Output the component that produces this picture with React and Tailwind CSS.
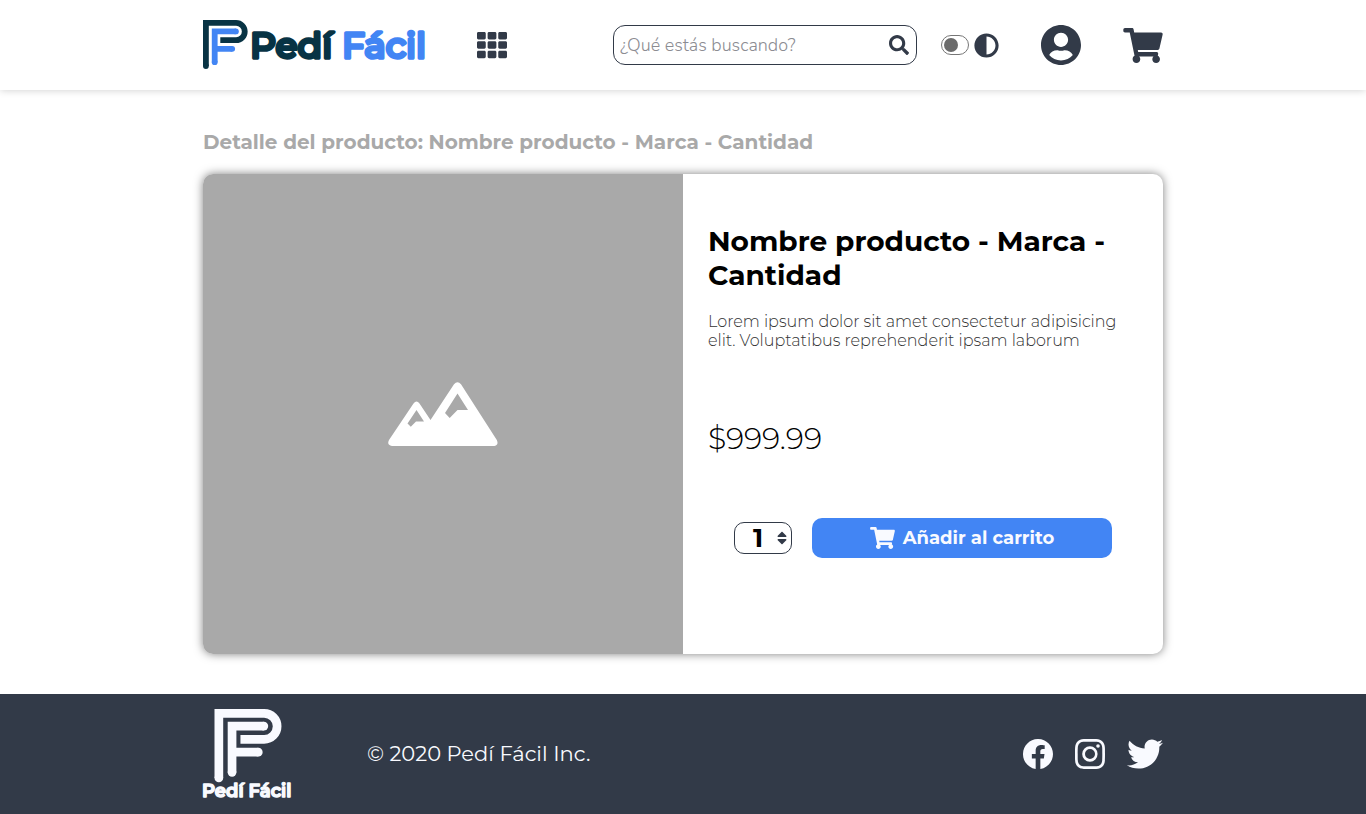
import React from "react";
import {
  FaTh,
  FaSearch,
  FaAdjust,
  FaUserCircle,
  FaShoppingCart,
  FaSort,
  FaTwitter,
} from "react-icons/fa";
import { BsFacebook, BsInstagram } from "react-icons/bs";

function Mark({ outer, inner }) {
  return (
    <g fill="none" strokeWidth="5.8">
      <path d="M2.9 46V2.9H33.1a8.65 8.65 0 0 1 0 17.3H17.3" stroke={outer} />
      <circle cx="2.9" cy="46" r="2.9" fill={outer} />
      <path d="M11.7 42.2V11.4H32.9M11.7 28.8H29.2" stroke={inner} />
      <circle cx="11.7" cy="42.2" r="2.9" fill={inner} />
      <circle cx="32.9" cy="11.4" r="2.9" fill={inner} />
      <circle cx="29.2" cy="28.8" r="2.9" fill={inner} />
    </g>
  );
}

function HeaderLogo() {
  return (
    <svg viewBox="0 0 222 50" className="h-[50px] w-[222px] shrink-0 overflow-visible" role="img" aria-label="Pedí Fácil">
      <Mark outer="#083344" inner="#4285f4" />
      <g
        className="font-['Montserrat','Inter',sans-serif] text-[36px] font-medium"
        strokeWidth="3.5"
        strokeLinejoin="round"
      >
        <text x="47" y="38" fill="#083344" stroke="#083344">Pedí</text>
        <text x="139" y="38" fill="#4285f4" stroke="#4285f4">Fácil</text>
      </g>
    </svg>
  );
}

function FooterLogo() {
  return (
    <svg viewBox="0 0 90 90" className="h-[90px] w-[90px] shrink-0 overflow-visible" role="img" aria-label="Pedí Fácil">
      <g transform="translate(11.5 0) scale(1.5)">
        <Mark outer="#f9faff" inner="#f9faff" />
      </g>
      <text
        x="-1"
        y="88"
        fill="#f9faff"
        stroke="#f9faff"
        strokeWidth="1.500"
        strokeLinejoin="round"
        className="font-['Montserrat','Inter',sans-serif] text-[18px] font-semibold"
      >
        Pedí Fácil
      </text>
    </svg>
  );
}

function Mountains() {
  return (
    <svg viewBox="0 0 110 65" className="h-[65px] w-[110px]" aria-hidden="true">
      <path
        fill="#fff"
        fillRule="evenodd"
        d="M4 64Q-1.500 63 1 58L25.500 21.500Q28.500 17.500 31.500 21.500L42.500 38L66 2.300Q69.500-2 73 2.300L108.800 58Q111 63 106.500 64ZM28.500 28L19.500 41.500L22.800 44.700L28 39.500H36ZM69.500 11.500L57 31L61.700 36L69.500 28H80Z"
      />
    </svg>
  );
}

export default function App() {
  return (
    <div className="flex min-h-screen flex-col bg-white font-['Montserrat','Inter',sans-serif] text-black">
      <header className="bg-white px-6 shadow-[0_0_8px_rgba(0,0,0,0.2)]">
        <div className="mx-auto flex h-[90px] max-w-[960px] items-center">
          <a href="#inicio" aria-label="Inicio">
            <HeaderLogo />
          </a>
          <button type="button" aria-label="Categorías" className="ml-[52px] text-[#323a48]">
            <FaTh className="h-[30px] w-[30px]" />
          </button>
          <div className="ml-auto flex items-center gap-[42px] text-[#323a48]">
            <div className="flex items-center gap-6">
              <form
                role="search"
                className="flex h-10 w-[304px] items-center rounded-[12px] border border-[#323a48] pr-[7px] pl-[6px]"
              >
                <input
                  type="text"
                  aria-label="Buscar"
                  placeholder="¿Qué estás buscando?"
                  className="w-0 flex-1 bg-transparent font-['Nunito','Open_Sans',sans-serif] text-[18px] font-light outline-none placeholder:text-[#8c8c92]"
                />
                <button type="button" aria-label="Buscar">
                  <FaSearch className="h-5 w-5" />
                </button>
              </form>
              <label className="flex items-center gap-[5px]">
                <input
                  type="checkbox"
                  aria-label="Modo oscuro"
                  className="flex h-5 w-7 appearance-none items-center rounded-full border border-[#767676] px-[2px] before:h-[14px] before:w-[14px] before:rounded-full before:bg-[#6b6b6b]"
                />
                <FaAdjust className="h-[25px] w-[25px]" />
              </label>
            </div>
            <button type="button" aria-label="Cuenta">
              <FaUserCircle viewBox="0 8 496 496" className="h-10 w-10" />
            </button>
            <button type="button" aria-label="Carrito">
              <FaShoppingCart className="h-[35px] w-10" />
            </button>
          </div>
        </div>
      </header>

      <main className="flex-1 px-6 py-10">
        <div className="mx-auto max-w-[960px]">
          <h1 className="mb-5 text-[20px] leading-6 font-bold text-[#a9a9a9]">
            Detalle del producto: Nombre producto - Marca - Cantidad
          </h1>
          <section className="grid min-h-[480px] grid-cols-2 overflow-hidden rounded-[10px] shadow-[0_0_10px_rgba(0,0,0,0.5)]">
            <div className="flex items-center justify-center bg-[#a9a9a9]">
              <Mountains />
            </div>
            <div className="px-[25px] pt-[50px]">
              <h2 className="text-[28px] leading-[34px] font-bold">
                Nombre producto - Marca - Cantidad
              </h2>
              <p className="mt-5 text-[16px] leading-[19px] font-light text-[#333]">
                Lorem ipsum dolor sit amet consectetur adipisicing elit. Voluptatibus reprehenderit ipsam laborum
              </p>
              <p className="mt-[70px] text-[30px] leading-[38px] font-light">$999.99</p>
              <div className="mt-[60px] flex items-center justify-center gap-5">
                <label className="flex h-8 w-[58px] items-center rounded-[10px] border border-[#323a48] pr-1 pl-1">
                  <input
                    type="number"
                    aria-label="Cantidad"
                    defaultValue="1"
                    className="w-0 flex-1 appearance-none bg-transparent text-center text-[26px] leading-7 font-bold outline-none [&::-webkit-inner-spin-button]:appearance-none"
                  />
                  <FaSort viewBox="0 0 320 512" className="h-4 w-[10px] text-[#323a48]" />
                </label>
                <button
                  type="button"
                  className="flex h-10 w-[300px] items-center justify-center gap-2 rounded-[10px] bg-[#4285f4] text-[18px] font-bold text-[#f9faff]"
                >
                  <FaShoppingCart className="h-[22px] w-[25px]" />
                  Añadir al carrito
                </button>
              </div>
            </div>
          </section>
        </div>
      </main>

      <footer className="bg-[#323a48] px-6 text-[#f9faff]">
        <div className="mx-auto flex h-[120px] max-w-[960px] items-center">
          <FooterLogo />
          <p className="ml-[74px] text-[21px] font-normal">© 2020 Pedí Fácil Inc.</p>
          <nav aria-label="Redes sociales" className="ml-auto flex items-center gap-[22px]">
            <a href="#facebook" aria-label="Facebook">
              <BsFacebook className="h-[30px] w-[30px]" />
            </a>
            <a href="#instagram" aria-label="Instagram">
              <BsInstagram className="h-[30px] w-[30px]" />
            </a>
            <a href="#twitter" aria-label="Twitter">
              <FaTwitter className="h-9 w-9" />
            </a>
          </nav>
        </div>
      </footer>
    </div>
  );
}
